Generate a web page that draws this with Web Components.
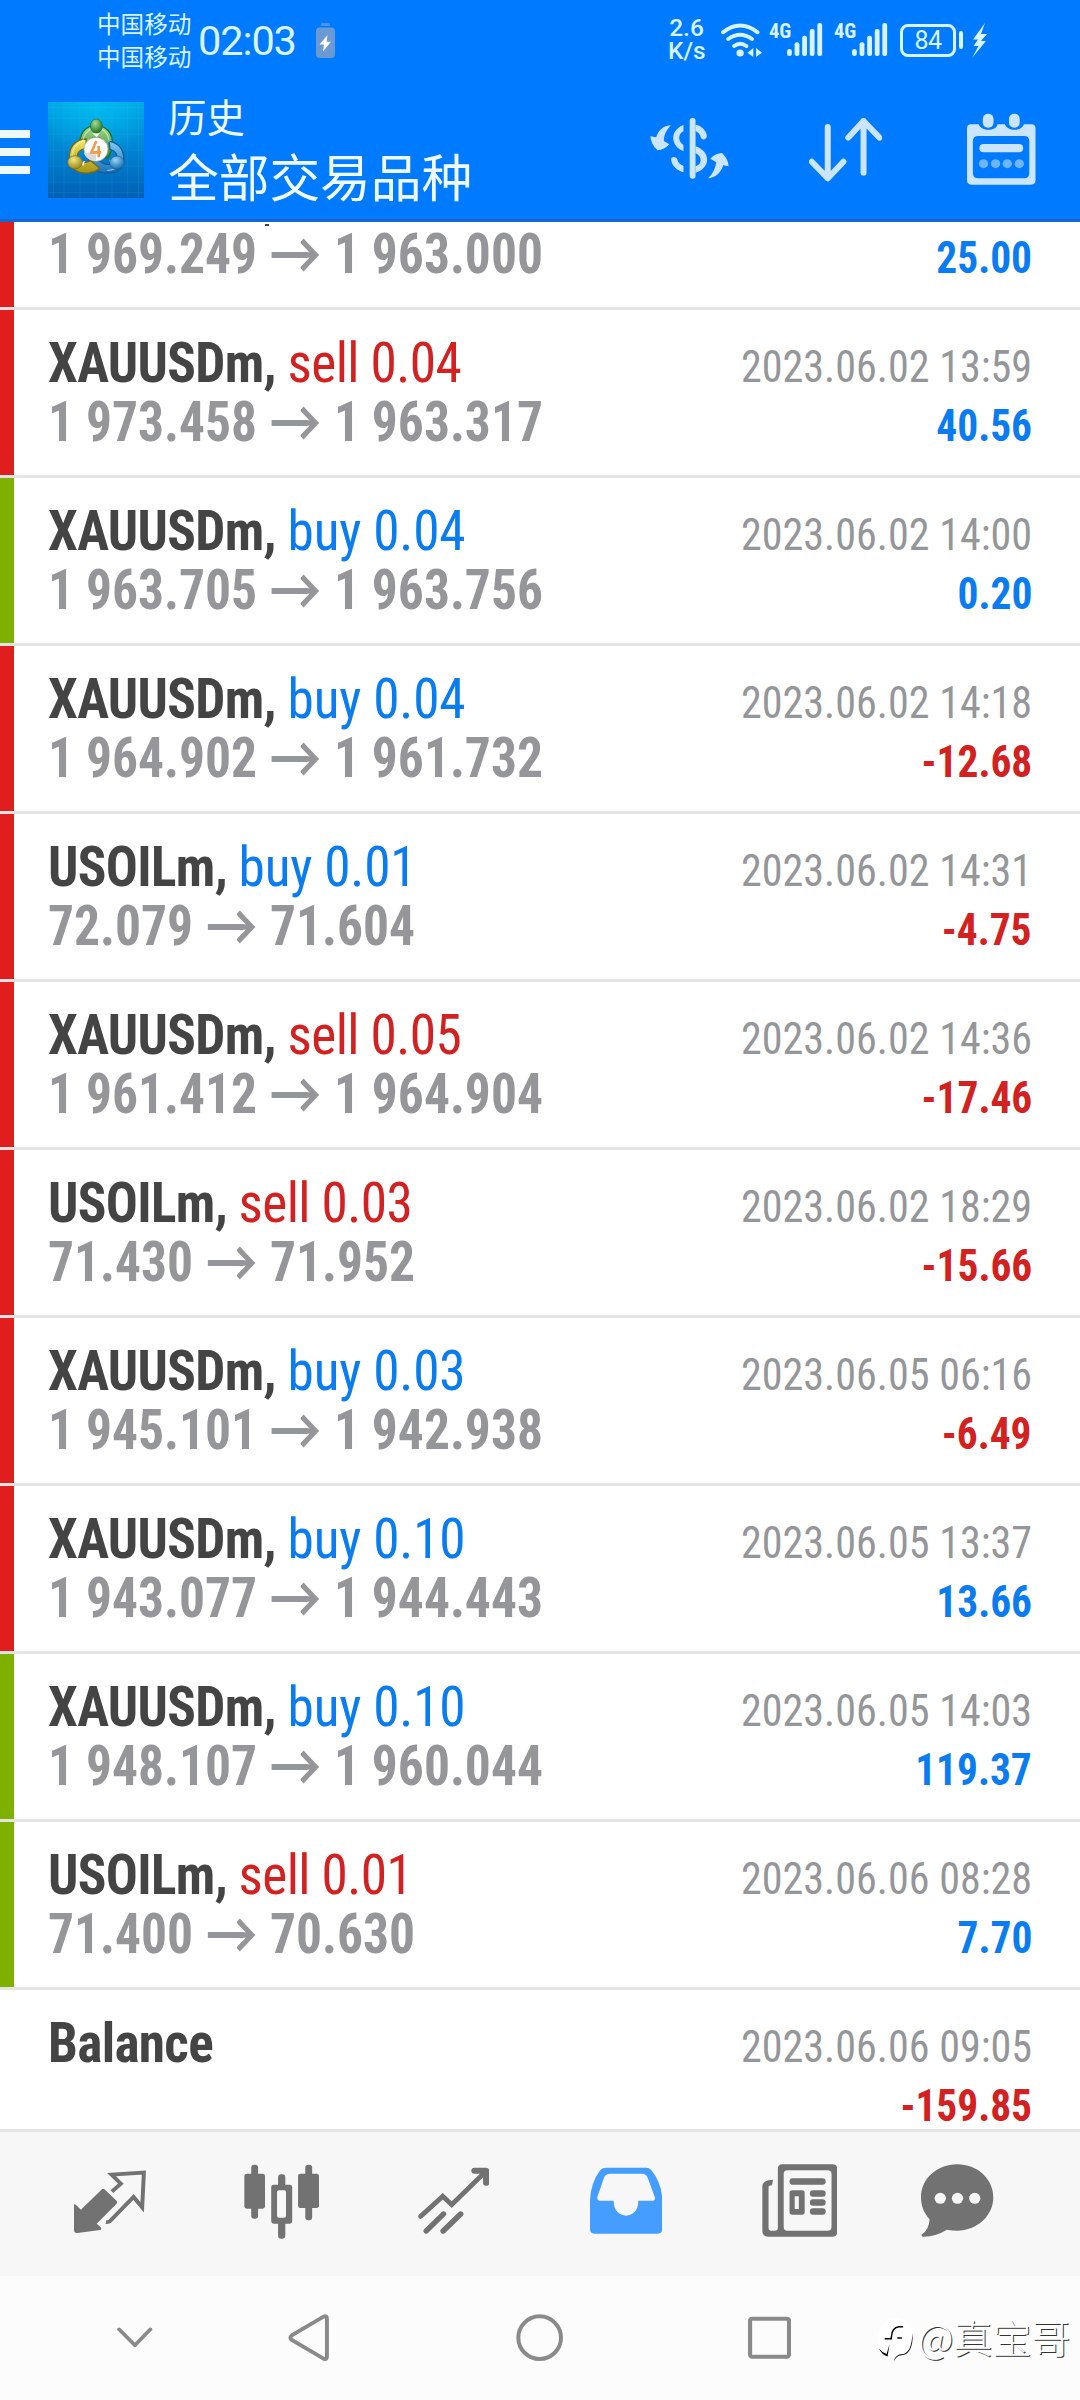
<!DOCTYPE html>
<html lang="zh-CN">
<head>
<meta charset="utf-8">
<title>历史</title>
<style>
  html, body { margin: 0; background: #fdfdfd; }
  body { width: 1080px; height: 2400px; overflow: hidden; }
</style>
</head>
<body>
<trade-app></trade-app>
<script>
const define = (name, markup) => {
  const tpl = document.createElement('template');
  tpl.innerHTML = markup;
  customElements.define(name, class extends HTMLElement {
    connectedCallback() {
      if (!this.shadowRoot) this.attachShadow({ mode: 'open' }).append(tpl.content.cloneNode(true));
    }
  });
};

define('signal-bars', `
<style>
  :host { display: flex; align-items: flex-start; color: #d8f2ff; width: 54px; height: 34px; }
  b { font: 700 20.5px/16px Roboto, sans-serif; font-stretch: 75%; width: 18px; }
  svg { display: block; width: 35.5px; height: 33px; }
</style>
<b><slot></slot></b>
<svg viewBox="720 66 103 99" preserveAspectRatio="none" fill="currentColor">
  <rect x="720" y="144" width="14" height="21" rx="7"/><rect x="742" y="124" width="14" height="41" rx="6"/>
  <rect x="764" y="104" width="14" height="61" rx="6"/><rect x="786" y="84" width="14" height="81" rx="6"/>
  <rect x="808" y="66" width="14" height="99" rx="6"/>
</svg>`);

define('status-bar', `
<style>
  :host { display: flex; align-items: center; height: 80px; color: #d8f4ff; font-family: Roboto, "Noto Sans CJK SC", sans-serif; }
  .carriers { margin: 0 0 0 97px; font: 400 23.6px/32.6px "Noto Sans CJK SC", sans-serif; width: 95px; white-space: nowrap; }
  .clock { margin: 2px 0 0 6px; width: 99px; font-size: 41.5px; line-height: 48px; letter-spacing: -1.1px; font-weight: 450; white-space: nowrap; }
  .cell { margin-left: 19px; width: 19px; height: 35px; }
  .rate { margin: -1px 0 0 333px; width: 37px; font-size: 24.5px; line-height: 22.6px; text-align: center; font-weight: 500; white-space: nowrap; }
  .wifi { margin: -1px 7.5px 0 15.5px; width: 41px; height: 34px; }
  signal-bars { margin: 0 11px 0 0; flex: none; }
  .batt { box-sizing: border-box; width: 56px; height: 33px; border: 3px solid; border-radius: 8px; font-size: 25px; line-height: 28px; text-align: center; letter-spacing: -.6px; margin-left: 1px; }
  .nub { width: 4.5px; height: 18px; border-radius: 2px; background: currentColor; margin-left: 2.5px; }
  .bolt { margin-left: 9px; width: 15px; height: 35px; }
  svg { display: block; flex: none; }
</style>
<div class="carriers"><div>中国移动</div><div>中国移动</div></div>
<div class="clock">02:03</div>
<svg class="cell" viewBox="0 0 19 35"><rect x="5" width="9" height="3" rx="1" fill="#4b91e8"/><rect y="4.500" width="19" height="30.500" rx="4" fill="#6b9ad3"/><path d="M11.500 12 3.500 21.500h4.500L7 28.500l8-9.800h-4.400z" fill="#fff"/></svg>
<div class="rate"><div>2.6</div><div>K/s</div></div>
<svg class="wifi" viewBox="527 64 118 102" preserveAspectRatio="none" fill="none" stroke="currentColor" stroke-width="11.500" stroke-linecap="round">
  <path d="M533 92Q582 51 632 92M548 112Q582 87 616 112M565 133Q582 119 600 133"/>
  <circle cx="582" cy="154" r="10.500" fill="currentColor" stroke="none"/>
  <path d="M603 153l17-14v27zM645 153l-17-14v27z" fill="currentColor" stroke="none"/>
</svg>
<signal-bars>4G</signal-bars><signal-bars>4G</signal-bars>
<div class="batt">84</div><div class="nub"></div>
<svg class="bolt" viewBox="0 0 15 35" fill="currentColor"><path d="M13 0 1 16.500h5L1.500 23h5L0 35l14-17h-5l6-7H9z"/></svg>`);

define('app-logo', `
<style>:host { display: block; width: 96px; height: 96px; } svg { display: block; width: 100%; height: 100%; }</style>
<svg viewBox="24 6 288 288">
  <defs>
    <linearGradient id="bg" x2="0" y2="1"><stop stop-color="#00a6e2"/><stop offset=".55" stop-color="#0080d0"/><stop offset="1" stop-color="#0060b4"/></linearGradient>
    <radialGradient id="glow" cx=".5" cy="0" r=".6"><stop stop-color="#00c4f6" stop-opacity=".75"/><stop offset="1" stop-color="#00c4f6" stop-opacity="0"/></radialGradient>
    <linearGradient id="g" x2="0" y2="1"><stop stop-color="#a5dc8c"/><stop offset="1" stop-color="#28802c"/></linearGradient>
    <linearGradient id="y" x2="0" y2="1"><stop stop-color="#f4ea62"/><stop offset="1" stop-color="#a99214"/></linearGradient>
    <linearGradient id="b" x2="0" y2="1"><stop stop-color="#82cbf2"/><stop offset="1" stop-color="#1771ba"/></linearGradient>
    <radialGradient id="gb" cx=".4" cy=".3" r=".7"><stop stop-color="#a4dc91"/><stop offset="1" stop-color="#237628"/></radialGradient>
    <radialGradient id="yb" cx=".4" cy=".3" r=".7"><stop stop-color="#f2e885"/><stop offset="1" stop-color="#9a8715"/></radialGradient>
    <radialGradient id="bb" cx=".4" cy=".3" r=".7"><stop stop-color="#98d6f7"/><stop offset="1" stop-color="#1769ad"/></radialGradient>
  </defs>
  <path fill="url(#bg)" d="M24 6h288v288H24z"/><path fill="url(#glow)" d="M24 6h288v288H24z"/>
  <path d="M40 6v288M72 6v288M120 6v288M168 6v288M216 6v288M263 6v288M296 6v288M24 22h288M24 55h288M24 103h288M24 150h288M24 198h288M24 246h288M24 278h288" stroke="#52c5f2" stroke-opacity=".2" stroke-width="2"/>
  <path d="M121 138C115 100 137 77 168 77s53 23 49 60c-2 22-10 33-18 40l-9-39c0-17-7-26-22-26-18 0-22 13-22 27z" fill="url(#g)" stroke="#256e34" stroke-width="4"/>
  <path d="M207 124c34 4 47 32 44 60-3 22-23 35-49 35-29 0-49-15-56-37h33c12 15 43 15 50-3 5-16-4-27-19-31z" fill="url(#b)" stroke="#155b9b" stroke-width="4"/>
  <path d="M139 117c-33 0-53 25-51 58 2 32 25 47 59 44 15-2 25-7 32-14l-27-23c-16 9-37 6-40-9-2-15 8-25 25-27z" fill="url(#y)" stroke="#746b1d" stroke-width="4"/>
  <path d="M128 125c5-27 20-40 40-40 25 0 39 17 39 42M96 169c1-23 14-39 32-45M244 174c0 23-17 37-43 37" fill="none" stroke="#fff" stroke-opacity=".45" stroke-width="4"/>
  <path d="M157 100h22l-9 12zM118 188l17-5-5 15zM208 179l17 4-12 14z" fill="#f7fbf2"/>
  <ellipse cx="169" cy="78" rx="18" ry="21" fill="url(#gb)" stroke="#246d2b" stroke-width="2"/>
  <ellipse cx="105" cy="187" rx="22" ry="20" fill="url(#yb)" stroke="#7d7020" stroke-width="2"/>
  <ellipse cx="231" cy="188" rx="22" ry="20" fill="url(#bb)" stroke="#195d99" stroke-width="2"/>
  <circle cx="168" cy="148" r="36" fill="#fff" stroke="#9aa39b" stroke-width="2"/>
  <path d="M132 158h36v24c-18 0-33-9-36-24z" fill="#d8dadb"/>
  <path d="M169 123 154 157h30M176 138v34" fill="none" stroke="#f29a4c" stroke-width="8"/>
</svg>`);

define('app-header', `
<style>
  :host { display: flex; height: 139px; border-bottom: 3px solid #1566cf; color: #effcff; }
  .menu { display: flex; flex-direction: column; gap: 10px; width: 30px; margin: 50px 18px 0 0; }
  .menu i { height: 8px; background: #eef9ff; }
  app-logo { margin-top: 22px; }
  .titles { display: flex; flex-direction: column; margin-left: 24px; width: 482px; font-family: "Noto Sans CJK SC", sans-serif; white-space: nowrap; }
  .small { font-size: 38.500px; line-height: 56px; margin-top: 7px; }
  .large { font-size: 50.700px; line-height: 60px; margin-top: 2px; }
  .icons { display: flex; margin-top: 32.500px; color: #cbe5ff; }
  svg { display: block; height: 72.7px; }
</style>
<div class="menu"><i></i><i></i><i></i></div>
<app-logo></app-logo>
<div class="titles"><div class="small">历史</div><div class="large">全部交易品种</div></div>
<div class="icons">
  <svg style="width:79px" viewBox="321 338 229 218" preserveAspectRatio="none" fill="currentColor">
    <path d="M382 375c-22 0-37 15-43 36l-17-3c1 15 8 31 21 42 13-1 26-8 34-18l-16-10c0-16 7-33 21-47z"/>
    <path d="M489 534c21-1 38-17 44-39l16 3c-1-16-8-29-19-40-14 1-27 8-34 17l17 11c-3 18-9 34-24 48z"/>
    <rect x="436" y="353" width="17" height="182" rx="8"/>
    <path d="M418 374v18c-17 10-16 31 0 42v19c-39-18-40-63 0-79zM453 373c17 3 31 16 33 34-1 12-15 14-18 4-2-9-7-15-15-19zM382 476c0-7 15-9 18 1 2 11 9 16 18 20v19c-20-6-35-21-36-40zM453 438c45 15 45 66 0 79v-19c20-6 20-30 0-40z"/>
  </svg>
  <svg style="width:73.300px;margin-left:80px" viewBox="782 338 213 218" preserveAspectRatio="none" fill="none" stroke="currentColor" stroke-width="17.500" stroke-linecap="round" stroke-linejoin="round">
    <path d="M836.500 380v154M790 484l46.500 50L882 484M940.500 517V362M896 412l44.500-50L987 412"/>
  </svg>
  <svg style="width:68.500px;margin-left:85px" viewBox="1242 338 199 218" preserveAspectRatio="none" fill="currentColor">
    <path fill-rule="evenodd" d="M1254 372h22c5 21 50 23 55 0h21c5 21 50 23 55 0h22q12 0 12 12v156q0 13-13 13h-173q-13 0-13-13V384q0-12 12-12zM1275 407q-16 0-16 16v95q0 16 16 16h133q15 0 15-16v-95q0-16-15-16z"/>
    <rect x="1288" y="340" width="31" height="42" rx="15"/><rect x="1364" y="340" width="31" height="42" rx="15"/>
    <rect x="1278" y="431" width="127" height="25" rx="12"/>
    <g opacity=".55"><circle cx="1290" cy="490" r="13.500"/><circle cx="1325" cy="490" r="13.500"/><circle cx="1359" cy="490" r="13.500"/><circle cx="1394" cy="490" r="13.500"/></g>
  </svg>
</div>`);

/* One line of the history: symbol and volume over prices, with time and profit on the right. */
customElements.define('deal-row', class extends HTMLElement {
  connectedCallback() {
    const a = n => this.getAttribute(n) || '';
    const red = '#d32020', blue = '#0a7cf2';
    const side = a('side'), [from, to] = a('prices').split('>');
    this.attachShadow({ mode: 'open' }).innerHTML = `
<style>
  :host { display: block; box-sizing: border-box; height: 168px; border-top: 3px solid #e4e4e4; background: #fff;
    font-family: Roboto, sans-serif; font-stretch: 75%; white-space: nowrap; }
  .body { display: flex; height: 165px; }
  .edge { width: 14px; background: ${{ r: '#e11e1e', g: '#7eb000' }[a('edge')] || '#fff'}; }
  .text { flex: 1; padding: 23px 48px 0 34px; }
  .line { display: flex; justify-content: space-between; align-items: baseline; font-size: 54.6px; line-height: 60px; height: 61px; }
  .line + .line { line-height: 57px; }
  .name, .price { transform-origin: 0 0; }
  .name { color: #444; font-weight: 700; letter-spacing: -.7px; transform: scaleX(.976); }
  .name span { color: ${side.startsWith('sell') ? red : blue}; font-weight: 400; letter-spacing: ${side.startsWith('sell') ? '-.6px' : '-.2px'}; }
  .price { color: #95969a; font-weight: 700; transform: scaleX(.943); }
  .price i { font: 700 56px/40px Lato, sans-serif; letter-spacing: .5px; }
  time, .profit { margin-left: auto; font-size: 45px; transform-origin: 100% 0; }
  time { color: #95969a; transform: scaleX(.936); }
  .profit { font-weight: 700; transform: scaleX(.92); color: ${a('profit').startsWith('-') ? red : blue}; }
  .only { padding-top: 3px; }
  .tail { align-self: flex-start; width: 4px; height: 2px; margin: 59px 0 0 217px; background: #445; }
</style>
<div class="body"><div class="edge"></div><div class="text">
  <div class="line">${a('name') ? `<div class="name">${a('name')}${side ? `, <span>${side}</span>` : ''}</div>` : '<div class="tail"></div>'}<time>${a('time')}</time></div>
  <div class="line">${from ? `<div class="price">${from} <i>→</i> ${to}</div>` : ''}<div class="profit${from ? '' : ' only'}">${a('profit')}</div></div>
</div></div>`;
  }
});

customElements.define('deal-list', class extends HTMLElement {
  connectedCallback() {
    const deals = [
      ['r', '', '', '', '1 969.249>1 963.000', '25.00'],
      ['r', 'XAUUSDm', 'sell 0.04', '2023.06.02 13:59', '1 973.458>1 963.317', '40.56'],
      ['g', 'XAUUSDm', 'buy 0.04', '2023.06.02 14:00', '1 963.705>1 963.756', '0.20'],
      ['r', 'XAUUSDm', 'buy 0.04', '2023.06.02 14:18', '1 964.902>1 961.732', '-12.68'],
      ['r', 'USOILm', 'buy 0.01', '2023.06.02 14:31', '72.079>71.604', '-4.75'],
      ['r', 'XAUUSDm', 'sell 0.05', '2023.06.02 14:36', '1 961.412>1 964.904', '-17.46'],
      ['r', 'USOILm', 'sell 0.03', '2023.06.02 18:29', '71.430>71.952', '-15.66'],
      ['r', 'XAUUSDm', 'buy 0.03', '2023.06.05 06:16', '1 945.101>1 942.938', '-6.49'],
      ['r', 'XAUUSDm', 'buy 0.10', '2023.06.05 13:37', '1 943.077>1 944.443', '13.66'],
      ['g', 'XAUUSDm', 'buy 0.10', '2023.06.05 14:03', '1 948.107>1 960.044', '119.37'],
      ['g', 'USOILm', 'sell 0.01', '2023.06.06 08:28', '71.400>70.630', '7.70'],
      ['', 'Balance', '', '2023.06.06 09:05', '', '-159.85'],
    ];
    this.attachShadow({ mode: 'open' }).innerHTML = `
<style>:host { display: block; height: 1907px; overflow: hidden; background: #fff; } .scroll { margin-top: -83px; }</style>
<div class="scroll">${deals.map(([e, n, s, t, p, v]) =>
  `<deal-row edge="${e}" name="${n}" side="${s}" time="${t}" prices="${p}" profit="${v}"></deal-row>`).join('')}</div>`;
  }
});

define('tab-bar', `
<style>
  :host { display: flex; height: 144px; border-top: 3px solid #e4e4e4; background: #f7f7f7; color: #727272; }
  svg { display: block; flex: none; height: 76.67px; margin-top: 31.300px; }
</style>
<svg style="width:72.300px;margin-left:74px" viewBox="215 130 210 230" preserveAspectRatio="none">
  <path fill="currentColor" d="M215 254l5 1 15 15 59-59q5-7 11-1l32 32q6 6 1 11l-57 59 13 12q2 5-3 7l-66 9q-10 1-10-9z"/>
  <path fill="none" stroke="currentColor" stroke-width="11.500" d="M325 216l26-24-27-27 94-6-5 104-25-31-69 73q-4 3-11 2"/>
</svg>
<svg style="width:75.400px;margin-left:97.400px" viewBox="708 130 219 230" preserveAspectRatio="none" fill="currentColor">
  <rect x="729" y="135" width="20" height="162" rx="9"/><rect x="709" y="162" width="60" height="105" rx="7"/>
  <rect x="886" y="135" width="20" height="167" rx="9"/><rect x="865" y="162" width="61" height="103" rx="7"/>
  <rect x="807" y="164" width="21" height="40" rx="9"/><rect x="807" y="300" width="21" height="57" rx="9"/>
  <path fill-rule="evenodd" d="M794 195h47q7 0 7 7v103q0 7-7 7h-47q-7 0-7-7V202q0-7 7-7zM810 212q-6 0-6 6v70q0 6 6 6h15q5 0 5-6v-70q0-6-5-6z"/>
</svg>
<svg style="width:71.600px;margin-left:98.500px" viewBox="1213 130 208 230" preserveAspectRatio="none" fill="none" stroke="currentColor" stroke-width="14.500" stroke-linecap="round">
  <path d="M1221 290l64-60 26 25 93-94"/><path stroke-width="18" stroke-linejoin="round" d="M1377 153h34v36"/>
  <path d="M1237 334l50-51M1286 334l51-51" stroke-width="16"/>
</svg>
<svg style="width:72.300px;margin-left:101px;color:#449dff" viewBox="146 130 210 230" preserveAspectRatio="none">
  <path fill="currentColor" fill-rule="evenodd" d="M192 144h117q9 0 15 7 31 40 32 92v86q0 13-13 13H159q-13 0-13-13v-86q1-52 30-92 7-7 16-7zM204 162q-12 0-17 11l-19 57q-3 13 6 13h41c-2 26 15 45 36 45s37-19 35-45h44q7-2 4-11l-21-59q-5-11-16-11z"/>
</svg>
<svg style="width:75.400px;margin-left:99.500px" viewBox="645 130 219 230" preserveAspectRatio="none">
  <path fill="currentColor" fill-rule="evenodd" d="M704 134h146q14 0 14 14v189q0 14-14 14H663q-17 0-17-17V200q0-20 31-20l-3 17q-10 0-10 5v124q0 7 7 7h11q9 0 9-7V148q0-14 13-14zM719 152q-11 0-11 11v158q0 12 11 12h116q12 0 12-12V163q0-11-12-11z"/>
  <g fill="currentColor"><rect x="725" y="176" width="105" height="19" rx="9"/><rect x="784" y="212" width="46" height="19" rx="9"/><rect x="784" y="239" width="46" height="19" rx="9"/><rect x="784" y="266" width="46" height="19" rx="9"/>
  <path fill-rule="evenodd" d="M733 212h28q8 0 8 8v57q0 8-8 8h-28q-8 0-8-8v-57q0-8 8-8zM740 230v38h12v-38z"/></g>
</svg>
<svg style="width:72.300px;margin-left:84.100px" viewBox="1108 130 210 230" preserveAspectRatio="none">
  <path fill="currentColor" d="M1213 134c59 0 105 44 105 99s-46 100-105 100q-15 0-30-3-30 20-68 21-9-1-4-7 20-14 22-45c-18-20-25-42-25-66 0-56 47-99 105-99z"/>
  <g fill="#f7f7f7"><circle cx="1164" cy="236" r="16.500"/><circle cx="1214" cy="236" r="16.500"/><circle cx="1264" cy="236" r="16.500"/></g>
</svg>`);

define('system-nav', `
<style>
  :host { display: flex; height: 124px; background: #fcfcfc; position: relative; }
  svg { display: block; flex: none; height: 47.300px; margin-top: 38.300px; }
  .mark { position: absolute; left: 878px; top: 34px; display: flex; align-items: center; color: #fff;
    font: 300 39px/48px "Noto Sans CJK SC", sans-serif; text-shadow: 1px 1px .5px #333; white-space: nowrap; }
  .mark svg { width: 36px; height: 44px; margin: 8px 4px 0 0; }
</style>
<svg style="width:35.500px;margin-left:117px" viewBox="340 583 103 142" preserveAspectRatio="none" fill="none" stroke="#8a8a8a" stroke-width="11" stroke-linecap="round" stroke-linejoin="round"><path d="M346 629l46 48 45-48"/></svg>
<svg style="width:41px;margin-left:135.400px" viewBox="836 583 119 142" preserveAspectRatio="none" fill="none" stroke="#8a8a8a" stroke-width="11.500"><path d="M939 591q10-4 10 6v114q0 10-10 6l-92-56q-8-7 0-14z"/></svg>
<svg style="width:47.300px;margin-left:187.300px" viewBox="0 0 142 142" fill="none" stroke="#8a8a8a" stroke-width="12"><circle cx="71" cy="71" r="64"/></svg>
<svg style="width:43.100px;margin-left:184.100px" viewBox="603 583 125 142" preserveAspectRatio="none" fill="none" stroke="#8a8a8a" stroke-width="12"><rect x="609" y="597" width="113" height="114" rx="6"/></svg>
<div class="mark">
  <svg viewBox="26 26 108 136" fill="none">
    <path d="M79 28c35 0 53 22 53 58 0 32-15 56-48 58l-10 17-1-18-14-1-34-24c-5-50 8-90 54-90z" fill="#fff"/>
    <path d="M131 72c3 43-11 68-34 69-12 1-18 7-23 19l2-9c5-8 12-13 21-13 22-1 32-24 34-66zM27 120q9 19 27 25l6-39-9 31q-14-5-24-17z" fill="#000"/>
    <path d="M102 53H89q-21 2-23 30l-1 7H45M84 88h14" stroke="#000" stroke-width="4.500"/>
  </svg><span>@真宝哥</span>
</div>`);

define('trade-app', `
<style>
  :host { display: flex; flex-direction: column; width: 1080px; height: 2400px; }
  .top { background: #007aff; }
</style>
<div class="top"><status-bar></status-bar><app-header></app-header></div>
<deal-list></deal-list>
<tab-bar></tab-bar>
<system-nav></system-nav>`);
</script>
</body>
</html>
